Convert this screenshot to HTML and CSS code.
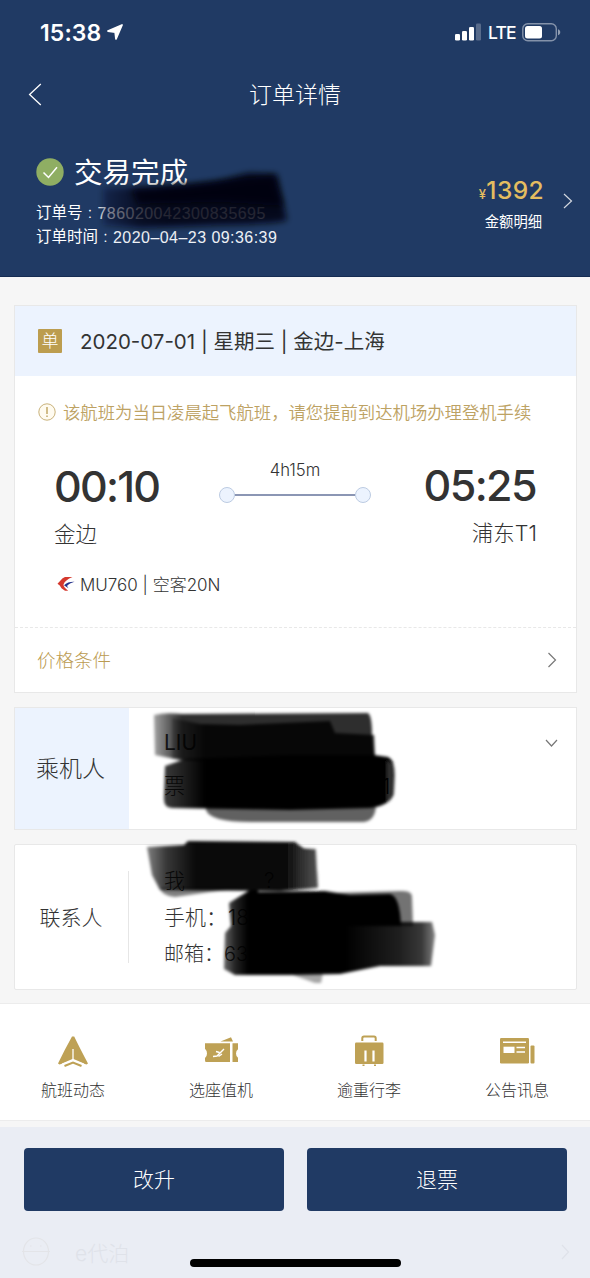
FILE: index.html
```html
<!DOCTYPE html>
<html lang="zh-CN">
<head>
<meta charset="utf-8">
<title>订单详情</title>
<link rel="stylesheet" href="styles.css">
</head>
<body>
<div class="screen">
  <header class="header">
    <div class="status">
      <span class="clock">15:38</span>
      <svg class="loc" width="16" height="16" viewBox="0 0 16 16"><path d="M15 1 9 14.800 8.200 8.200 1 7z" fill="#fff" stroke="#fff" stroke-width="1.800" stroke-linejoin="round"/></svg>
      <svg class="signal" width="27" height="18" viewBox="0 0 27 18" fill="#fff"><rect x="0" y="11" width="5" height="6.500" rx="1.300"/><rect x="7" y="8" width="5" height="9.500" rx="1.300"/><rect x="14" y="4" width="5" height="13.500" rx="1.300"/><rect x="21" y="0.500" width="5" height="17" rx="1.300" opacity=".25"/></svg>
      <span class="lte">LTE</span>
      <svg class="battery" width="39" height="19" viewBox="0 0 39 19"><rect x=".8" y=".8" width="33.500" height="17" rx="5" fill="none" stroke="#fff" stroke-width="1.400" opacity=".45"/><rect x="3" y="3" width="17" height="12.600" rx="2.500" fill="#fff"/><path d="M36 6.300c3 1 3 5 0 6z" fill="#fff" opacity=".5"/></svg>
    </div>
    <div class="nav">
      <svg class="back" width="14" height="23" viewBox="0 0 14 23"><path d="M12.800 1 1.600 11.500 12.800 22" fill="none" stroke="#fff" stroke-width="1.300"/></svg>
      <h1 class="title">订单详情</h1>
    </div>
    <div class="summary">
      <div class="order">
        <div class="state">
          <svg width="28" height="28" viewBox="0 0 28 28"><circle cx="14" cy="14" r="13.700" fill="#8fae63"/><path d="m7.500 14.500 5 5L21 9.200" fill="none" stroke="#fff" stroke-width="1.500"/></svg>
          <span class="state-text">交易完成</span>
        </div>
        <div class="line"><span class="label">订单号</span><span class="colon">:</span><span class="value number">786020042300835695</span></div>
        <div class="line"><span class="label">订单时间</span><span class="colon">:</span><span class="value">2020–04–23 09:36:39</span></div>
      </div>
      <div class="amount">
        <div class="price"><span class="yen">¥</span>1392</div>
        <div class="detail">金额明细</div>
      </div>
      <svg class="more" width="10" height="16" viewBox="0 0 10 16"><path d="m1 1 7.500 7L1 15" fill="none" stroke="#fff" stroke-width="1.200" opacity=".8"/></svg>
    </div>
    <svg class="marker" width="590" height="277" viewBox="0 0 590 277">
      <defs>
        <filter id="soft" x="-20%" y="-30%" width="140%" height="160%"><feGaussianBlur stdDeviation="3"/></filter>
        <linearGradient id="fade" x1="0" x2="1" y1="0" y2="0"><stop offset="0" stop-color="#000513" stop-opacity=".35"/><stop offset=".2" stop-color="#000513" stop-opacity=".75"/><stop offset=".35" stop-color="#000513" stop-opacity=".84"/><stop offset="1" stop-color="#000513" stop-opacity=".84"/></linearGradient>
      </defs>
      <path d="M103 188Q180 187 225 179L248 173 277 174 287 220Q280 224 220 225L140 228 103 225Z" fill="url(#fade)" filter="url(#soft)"/>
      <path d="M132 190Q190 188 246 178L274 176 283 206 220 202 138 204Z" fill="#00020a" opacity=".8" filter="url(#soft)"/>
    </svg>
  </header>

  <main class="content">
    <section class="card flight">
      <div class="flight-head"><span class="tag">单</span><span class="route">2020-07-01 | 星期三 | 金边-上海</span></div>
      <div class="flight-body">
        <div class="notice">
          <svg width="18" height="18" viewBox="0 0 18 18"><circle cx="9" cy="9" r="8.200" fill="#fffbf0" stroke="#c9b27a"/><path d="M9 4v7M9 12.500v1.500" stroke="#b99a50" stroke-width="1.300"/></svg>
          <span>该航班为当日凌晨起飞航班，请您提前到达机场办理登机手续</span>
        </div>
        <div class="trip">
          <div class="place"><div class="hour">00:10</div><div class="city">金边</div></div>
          <div class="span"><div class="duration">4h15m</div><div class="track"><i class="dot"></i><i class="rail"></i><i class="dot"></i></div></div>
          <div class="place end"><div class="hour arrive">05:25</div><div class="city">浦东T1</div></div>
        </div>
        <div class="plane">
          <svg width="18" height="15" viewBox="0 0 18 15"><path d="M15.500 1H8Q5.500 1.500 3.500 4.500L.5 7.700Q3 9 4.500 12.200L8 14.700h3.200Q6.500 11.500 6.500 8.500 8 4 15.500 1z" fill="#d5392e"/><path d="M17.500 5.800Q11 5.500 7 9.200l4.500 3Q9.500 10.300 10.500 9.200 13 7 17.500 5.800z" fill="#26338b"/></svg>
          <span>MU760 | 空客20N</span>
        </div>
      </div>
      <div class="terms"><span>价格条件</span><svg width="10" height="16" viewBox="0 0 10 16"><path d="m1.500 1 7 7-7 7" fill="none" stroke="#777" stroke-width="1.200"/></svg></div>
    </section>

    <section class="card passenger">
      <div class="side tinted">乘机人</div>
      <div class="rows">
        <div class="row name">LIU</div>
        <div class="row">票</div>
      </div>
      <svg class="chev" width="13" height="9" viewBox="0 0 13 9"><path d="m1 1 5.500 6L12 1" fill="none" stroke="#777" stroke-width="1.200"/></svg>
      <svg class="marker" width="562" height="123" viewBox="14 707 562 123">
        <defs>
          <filter id="edge" x="-10%" y="-20%" width="120%" height="140%"><feGaussianBlur stdDeviation="1.500"/></filter>
          <linearGradient id="ink-a" x1="153" x2="182" y1="0" y2="0" gradientUnits="userSpaceOnUse"><stop offset="0" stop-opacity=".35"/><stop offset=".5" stop-opacity=".6"/><stop offset="1" stop-opacity=".82"/></linearGradient>
          <linearGradient id="ink-g" x1="170" x2="205" y1="0" y2="0" gradientUnits="userSpaceOnUse"><stop offset="0" stop-opacity=".2"/><stop offset="1" stop-opacity=".85"/></linearGradient>
          <linearGradient id="ink-b" x1="162" x2="205" y1="0" y2="0" gradientUnits="userSpaceOnUse"><stop offset="0" stop-opacity=".76"/><stop offset="1" stop-opacity="1"/></linearGradient>
        </defs>
        <g filter="url(#edge)">
          <path d="M154 715Q165 712 182 714L368 713Q372 716 372 735L375 758 320 765 180 760 155 755Z" fill="url(#ink-a)"/>
          <path d="M172 718 200 724 240 725 330 721 335 733 374 735 375 760 172 759Z" fill="url(#ink-g)"/>
          <path d="M206 806 376 804Q376 820 364 822L250 822Q210 822 206 810Z" opacity=".62"/>
          <path d="M165 766 185 759 290 755 374 755 388 757Q395 760 395 775L394 795Q388 806 370 808L290 810 172 808Q163 808 164 796Z" fill="url(#ink-b)"/>
          <path d="M387 761 396 766V796L387 802Z" fill="#fff" opacity=".18"/>
        </g>
        <text class="under" x="382" y="794">1</text>
      </svg>
    </section>

    <section class="card contact">
      <div class="side">联系人</div>
      <div class="rows">
        <div class="row">我<span class="question">?</span></div>
        <div class="row">手机：<span class="digits">18</span></div>
        <div class="row mail">邮箱：63</div>
      </div>
      <svg class="marker" width="562" height="146" viewBox="14 844 562 146">
        <defs>
          <linearGradient id="ink-c" x1="147" x2="195" y1="0" y2="0" gradientUnits="userSpaceOnUse"><stop offset="0" stop-opacity=".5"/><stop offset=".4" stop-opacity=".78"/><stop offset="1" stop-opacity=".96"/></linearGradient>
          <linearGradient id="ink-d" x1="285" x2="318" y1="0" y2="0" gradientUnits="userSpaceOnUse"><stop offset="0" stop-color="#fff" stop-opacity="0"/><stop offset="1" stop-color="#fff" stop-opacity=".6"/></linearGradient>
          <linearGradient id="ink-e" x1="222" x2="248" y1="0" y2="0" gradientUnits="userSpaceOnUse"><stop offset="0" stop-opacity=".55"/><stop offset=".5" stop-opacity=".86"/><stop offset="1" stop-opacity="1"/></linearGradient>
          <linearGradient id="ink-f" x1="345" x2="435" y1="0" y2="0" gradientUnits="userSpaceOnUse"><stop offset="0" stop-opacity="1"/><stop offset=".6" stop-opacity=".88"/><stop offset=".85" stop-opacity=".78"/><stop offset="1" stop-opacity=".5"/></linearGradient>
        </defs>
        <g filter="url(#edge)">
          <path d="M160 888H245L210 892 175 897Q162 896 160 888Z" opacity=".5"/>
          <path d="M147 847 184 845 188 841 295 842 304 848 316 849 318 888 280 891 160 890 152 875Z" fill="url(#ink-c)"/>
          <path d="M285 843h19l14 6v40h-33z" fill="url(#ink-d)" opacity=".5"/>
          <path d="M330 893 400 891Q413 890 412 898L413 926H330Z" opacity=".55"/>
          <path d="M248 892 325 891 350 895 390 894Q400 896 401 926H253Z" fill="#000"/>
          <path d="M229 903 250 890H258V975H235L224 969 225 933 231 926Z" fill="url(#ink-e)"/>
          <path d="M256 900 340 915 345 922 432 922 435 935 431 966 380 966 340 974 290 975 256 975Z" fill="url(#ink-f)"/>
          <path d="M290 974 323 973 321 983 315 983Z" opacity=".35"/>
        </g>
      </svg>
    </section>
  </main>

  <nav class="services">
    <a class="service">
      <svg width="36" height="36" viewBox="0 0 36 36"><path d="M17 3.500h2.200Q25 15.500 33 30.500l-1.500 1L18 27 4.500 31.500 3 30.500Q10 16 17 3.500z" fill="#bea155"/><path d="M18 16v13" stroke="#fff" stroke-width="1.300"/><path d="m8 33 10-4.200L28 33" fill="none" stroke="#fff" stroke-width="5.500"/><path d="m9.500 33 8.500-3.500 8.500 3.500" fill="none" stroke="#bea155" stroke-width="2"/></svg>
      <span>航班动态</span>
    </a>
    <a class="service">
      <svg width="36" height="36" viewBox="0 0 36 36"><path d="M17.500 8.500 28 4.300l2 4.200zM2 10.300h25V29H2.800q-1-.3-.8-4 2-1.500 2-4.500T2 15.700zM29.500 10.300h5.500v6q-2 1.200-2 4.200t2 4.200V29h-5.500z" fill="#bea155"/><path d="m10 23.500 4-.5 7-7M13 18.500l3.500 1M15.500 23.500l3.500-2.500" fill="none" stroke="#fff" stroke-width="1.400"/></svg>
      <span>选座值机</span>
    </a>
    <a class="service">
      <svg width="36" height="36" viewBox="0 0 36 36"><path d="M11.300 8V5.300Q11.300 3.500 13 3.500H23Q24.700 3.500 24.700 5.300V8" fill="none" stroke="#bea155" stroke-width="2"/><rect x="4" y="9.500" width="28.500" height="21.500" rx="1.200" fill="#bea155"/><path d="M14.500 17.500v11M22.500 17.500v11" stroke="#fff" stroke-width="2.200"/><path d="M12.500 31.500V33M24 31.500V33" stroke="#bea155" stroke-width="2"/></svg>
      <span>逾重行李</span>
    </a>
    <a class="service">
      <svg width="36" height="36" viewBox="0 0 36 36"><rect x="1" y="5" width="29" height="25.500" rx="1.200" fill="#bea155"/><rect x="31.500" y="12.500" width="4" height="18" rx="1" fill="#bea155"/><path d="M4 9.200h23M17.500 14.500H26M17.500 19H26" stroke="#fff" stroke-width="1.500"/><rect x="4.500" y="13.700" width="11" height="6.300" fill="#fff"/></svg>
      <span>公告讯息</span>
    </a>
  </nav>

  <footer class="footer">
    <div class="buttons"><button class="btn">改升</button><button class="btn">退票</button></div>
    <div class="ghost">
      <svg width="28" height="30" viewBox="0 0 28 30"><g fill="none" stroke="#e3e4e8" stroke-width="1.200"><ellipse cx="14" cy="14.500" rx="12.500" ry="13.500"/><path d="M0 14.500h28M8 9h1.500M18 9h1.500"/></g></svg>
      <span>e代泊</span>
      <svg class="ghost-more" width="9" height="16" viewBox="0 0 9 16"><path d="m1 1 6.500 7L1 15" fill="none" stroke="#dfe2e9" stroke-width="1.200"/></svg>
    </div>
    <div class="home"></div>
  </footer>
</div>
</body>
</html>
```
FILE: styles.css
```css
* { box-sizing: border-box; margin: 0; padding: 0; }
body {
  width: 590px;
  background: #f6f6f6;
  font-family: Inter, "Noto Sans CJK SC", sans-serif;
  font-weight: 300;
  color: #333;
}
svg { display: block; flex: none; }
.screen { height: 1278px; display: flex; flex-direction: column; overflow: hidden; }
.marker { position: absolute; left: -1px; top: -1px; overflow: visible; }

.header { position: relative; height: 277px; background: #203a64; color: #fff; border-bottom: 1px solid #152c52; }
.header .marker { left: 0; top: 0; }
.status { height: 64px; display: flex; align-items: center; padding: 0 29px 0 40px; }
.clock { font-size: 23px; font-weight: 600; letter-spacing: .1px; width: 67px; padding-top: 2px; }
.signal { margin-left: auto; }
.lte { font-size: 17.500px; font-weight: 500; margin: 1px 0 0 6px; width: 34px; letter-spacing: -.8px; }
.nav { height: 60px; display: grid; grid-template-columns: 1fr auto 1fr; align-items: center; padding: 0 28px; }
.title { font-size: 23px; font-weight: 300; line-height: 34px; grid-column: 2; padding-top: 2px; }
.summary { display: flex; padding: 29px 17px 0 36px; }
.order { flex: 1; }
.state { height: 38px; display: flex; align-items: center; gap: 10px; }
.state-text { font-size: 28.500px; font-weight: 400; line-height: 38px; padding-top: 1px; }
.line { display: flex; height: 24px; align-items: center; font-size: 15.500px; white-space: nowrap; }
.state + .line { margin-top: 10px; }
.label { font-weight: 400; font-size: 15.500px; line-height: 22px; margin-top: -1px; }
.colon { width: 15px; text-align: center; margin-top: -1px; }
.value { font-family: "Liberation Sans", sans-serif; font-weight: 400; font-size: 16px; letter-spacing: .45px; color: #eef1f6; margin-top: 1px; }
.number { letter-spacing: .45px; color: #e1e5ec; }
.amount { text-align: right; padding-top: 22px; margin-right: 20px; }
.price { color: #e4bd60; font-size: 24.500px; font-weight: 500; line-height: 30px; letter-spacing: .4px; margin-right: -1px; }
.yen { font-size: 13px; }
.detail { font-size: 14.300px; font-weight: 400; line-height: 22px; margin: 2px 1px 0 0; }
.more { margin-top: 40px; }

.content { padding: 28px 14px 0; display: flex; flex-direction: column; gap: 14px; }
.card { position: relative; width: 563px; background: #fff; border: 1px solid #e8e8e8; display: flex; }
.flight { height: 388px; flex-direction: column; }
.flight-head { height: 70px; background: #ecf3fe; display: flex; align-items: center; padding-left: 23px; }
.tag { width: 24px; height: 24px; background: #bc9d4f; color: #fff; font-size: 17px; line-height: 24px; text-align: center; border-radius: 1px; }
.route { margin: -2px 0 0 18px; font-size: 20.500px; font-weight: 400; }
.flight-body { height: 252px; border-bottom: 1px dashed #e8e8e8; }
.notice { height: 72px; display: flex; align-items: center; gap: 7px; padding-left: 23px; color: #bda263; font-size: 17.350px; font-weight: 350; white-space: nowrap; }
.notice span { margin-top: -2px; }
.trip { display: grid; grid-template-columns: 165px 152px 1fr; padding: 10px 38px 0 39px; }
.hour { font-size: 43px; font-weight: 500; line-height: 56px; letter-spacing: -1.800px; }
.arrive { margin-top: -1px; margin-bottom: 1px; letter-spacing: -1.600px; padding-right: 2px; }
.city { font-size: 21.500px; line-height: 36px; margin-top: 2px; padding-right: 1px; }
.end { text-align: right; }
.duration { text-align: center; font-size: 16.700px; line-height: 24px; }
.track { display: flex; align-items: center; margin: 5px 0 0 0; }
.dot { width: 16px; height: 16px; border-radius: 50%; background: #ecf3fe; border: 1px solid #bccbe2; }
.rail { flex: 1; height: 2px; background: #8b96b4; }
.plane { display: flex; align-items: center; gap: 5px; height: 30px; padding-left: 42px; margin-top: 16px; font-size: 17px; }
.terms { flex: 1; display: flex; align-items: center; justify-content: space-between; padding: 0 19px 0 22px; color: #bb9b51; font-size: 18.500px; }
.terms span { margin-top: -2px; }

.side { width: 114px; display: flex; align-items: center; justify-content: center; font-size: 23px; flex: none; padding: 0 3px 3px 0; }
.tinted { background: #ecf3fe; }
.rows { padding-left: 35px; }
.passenger { height: 123px; }
.passenger .rows { padding-top: 12px; }
.row { font-size: 21px; line-height: 36px; white-space: nowrap; height: 36.500px; }
.name { font-weight: 400; height: 48px; line-height: 46px; }
.chev { position: absolute; right: 18px; top: 31px; }
.under { font-size: 21px; }
.contact { height: 146px; border-radius: 2px; }
.contact .side { font-size: 21px; margin: 26px 0; border-right: 1px solid #e6e6e6; padding-right: 1px; }
.contact .rows { padding-top: 18px; }
.question { margin-left: 79px; }
.digits { margin-left: 1px; }
.mail { font-size: 20px; }

.services { height: 118px; margin-top: 13px; background: #fff; border: solid #ececec; border-width: 1px 0; display: grid; grid-template-columns: repeat(4, 148px); flex: none; }
.service { display: flex; flex-direction: column; align-items: center; padding: 29px 2px 0 0; font-size: 16px; line-height: 24px; gap: 9px; }

.footer { position: relative; height: 151px; margin-top: 6px; background: #eaedf4; flex: none; }
.buttons { display: grid; grid-template-columns: 260px 260px; gap: 23px; padding: 21px 24px 0; }
.btn { height: 63px; border: 0; border-radius: 4px; background: #203a64; color: #fff; font: inherit; font-size: 21px; padding-bottom: 3px; }
.ghost { display: flex; align-items: center; padding: 0 20px 0 22px; margin-top: 23px; height: 36px; font-size: 21px; color: #dfe2e9; gap: 25px; }
.ghost-more { margin-left: auto; }
.home { position: absolute; left: 190px; bottom: 11px; width: 211px; height: 8px; border-radius: 4px; background: #000; }
```
